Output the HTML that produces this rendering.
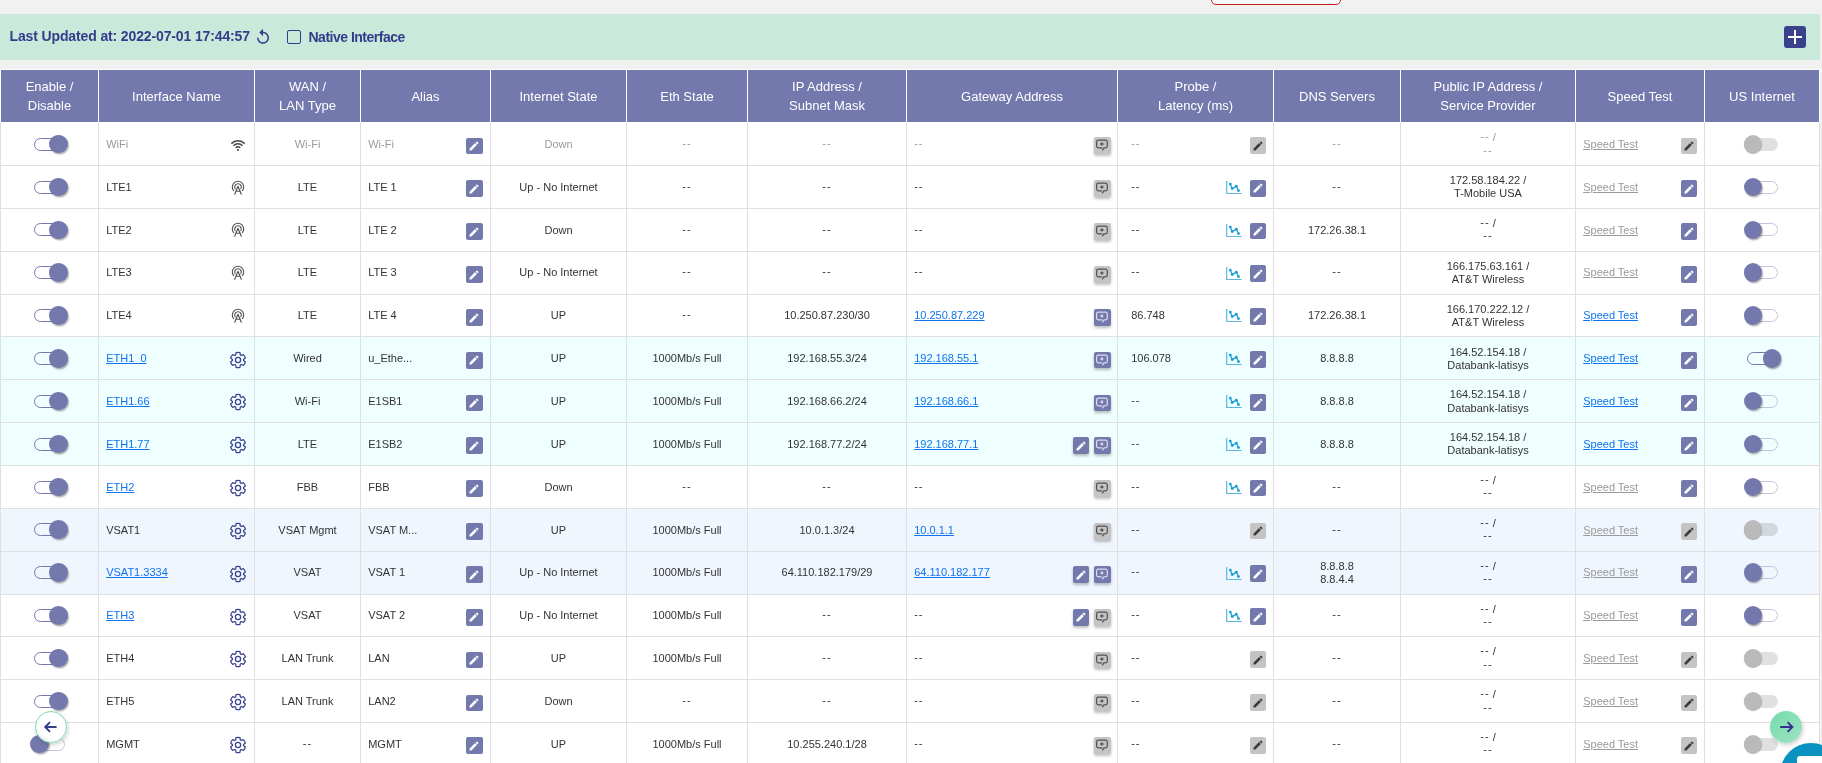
<!DOCTYPE html><html><head><meta charset="utf-8"><style>
*{box-sizing:border-box;margin:0;padding:0}
html,body{width:1822px;height:763px;overflow:hidden;background:#f1f1f1;font-family:"Liberation Sans",sans-serif;position:relative}
.a{position:absolute}
.t{position:absolute;font-size:11px;line-height:13.3px;white-space:nowrap;color:#333}
.g{color:#9a9a9a}
.lk{color:#0f74ee;text-decoration:underline}
.lg{color:#9a9a9a;text-decoration:underline}
.ht{position:absolute;color:#fff;font-size:13px;line-height:19px;text-align:center;white-space:nowrap}
.btn{position:absolute;width:16.5px;height:16.8px;border-radius:2px;background:#7479ad}
.btn.gr{background:#c4c4c4}
.sh{box-shadow:0 2px 3px rgba(0,0,0,.25)}
.trk{position:absolute;width:30.5px;height:13px;border-radius:7px;border:1px solid #7479ad;background:transparent}
.trk.off{border-color:#c3c5df}
.trk.dis{border:none;background:rgba(0,0,0,.12)}
.knob{position:absolute;width:18.5px;height:18.5px;border-radius:50%;background:#7479ad;box-shadow:1px 1.5px 1.5px rgba(0,0,0,.3)}
.knob.dis{background:#bababa;box-shadow:0 1px 1px rgba(0,0,0,.3)}
svg{position:absolute;overflow:visible}
</style></head><body><div style="position:absolute;left:0;top:0;width:1822px;height:763px;will-change:transform">
<div class="a" style="left:1211px;top:-20px;width:130px;height:25px;border:1.6px solid #c41f1f;border-radius:5px;background:#f4f7f7"></div>
<div class="a" style="left:0;top:14px;width:1820px;height:46px;background:#c9e9da"></div>
<div class="a" style="left:9.5px;top:27.8px;font-size:14px;line-height:16px;font-weight:bold;letter-spacing:-0.13px;color:#343c8b;white-space:nowrap">Last Updated at: 2022-07-01 17:44:57</div>
<svg style="left:254px;top:27.5px" width="18" height="18" viewBox="0 0 24 24"><path fill="#343c8b" d="M12 5V1L7 6l5 5V7c3.31 0 6 2.69 6 6s-2.69 6-6 6-6-2.69-6-6H4c0 4.42 3.58 8 8 8s8-3.58 8-8-3.58-8-8-8z"/></svg>
<div class="a" style="left:287px;top:30px;width:13.8px;height:13.8px;border:1.8px solid #343c8b;border-radius:2px"></div>
<div class="a" style="left:308.5px;top:29.2px;font-size:14px;line-height:16px;font-weight:bold;letter-spacing:-0.5px;color:#343c8b;white-space:nowrap">Native Interface</div>
<div class="a" style="left:1784px;top:26px;width:22px;height:22px;border-radius:3px;background:#39418c"></div>
<div class="a" style="left:1788px;top:36px;width:14px;height:2.2px;background:#fff"></div>
<div class="a" style="left:1793.9px;top:30px;width:2.2px;height:14px;background:#fff"></div>
<div class="a" style="left:0;top:69px;width:1820px;height:700px;background:#fff"></div>
<div class="a" style="left:1px;top:70px;width:1818px;height:52px;background:#7479ad"></div>
<div class="a" style="left:98px;top:70px;width:1px;height:52px;background:#fff"></div>
<div class="a" style="left:254px;top:70px;width:1px;height:52px;background:#fff"></div>
<div class="a" style="left:360px;top:70px;width:1px;height:52px;background:#fff"></div>
<div class="a" style="left:490px;top:70px;width:1px;height:52px;background:#fff"></div>
<div class="a" style="left:626px;top:70px;width:1px;height:52px;background:#fff"></div>
<div class="a" style="left:747px;top:70px;width:1px;height:52px;background:#fff"></div>
<div class="a" style="left:906px;top:70px;width:1px;height:52px;background:#fff"></div>
<div class="a" style="left:1117px;top:70px;width:1px;height:52px;background:#fff"></div>
<div class="a" style="left:1273px;top:70px;width:1px;height:52px;background:#fff"></div>
<div class="a" style="left:1400px;top:70px;width:1px;height:52px;background:#fff"></div>
<div class="a" style="left:1575px;top:70px;width:1px;height:52px;background:#fff"></div>
<div class="a" style="left:1704px;top:70px;width:1px;height:52px;background:#fff"></div>
<div class="ht" style="left:1px;top:77.0px;width:97px">Enable /<br>Disable</div>
<div class="ht" style="left:99px;top:86.5px;width:155px">Interface Name</div>
<div class="ht" style="left:255px;top:77.0px;width:105px">WAN /<br>LAN Type</div>
<div class="ht" style="left:361px;top:86.5px;width:129px">Alias</div>
<div class="ht" style="left:491px;top:86.5px;width:135px">Internet State</div>
<div class="ht" style="left:627px;top:86.5px;width:120px">Eth State</div>
<div class="ht" style="left:748px;top:77.0px;width:158px">IP Address /<br>Subnet Mask</div>
<div class="ht" style="left:907px;top:86.5px;width:210px">Gateway Address</div>
<div class="ht" style="left:1118px;top:77.0px;width:155px">Probe /<br>Latency (ms)</div>
<div class="ht" style="left:1274px;top:86.5px;width:126px">DNS Servers</div>
<div class="ht" style="left:1401px;top:77.0px;width:174px">Public IP Address /<br>Service Provider</div>
<div class="ht" style="left:1576px;top:86.5px;width:128px">Speed Test</div>
<div class="ht" style="left:1705px;top:86.5px;width:114px">US Internet</div>
<div class="a" style="left:1px;top:337.43px;width:1818px;height:42.846px;background:#effefe"></div>
<div class="a" style="left:1px;top:380.28px;width:1818px;height:42.846px;background:#effefe"></div>
<div class="a" style="left:1px;top:423.12px;width:1818px;height:42.846px;background:#effefe"></div>
<div class="a" style="left:1px;top:508.81px;width:1818px;height:42.846px;background:#eff6fd"></div>
<div class="a" style="left:1px;top:551.66px;width:1818px;height:42.846px;background:#eff6fd"></div>
<div class="a" style="left:0;top:165.05px;width:1820px;height:1px;background:#e0e0e0"></div>
<div class="a" style="left:0;top:207.89px;width:1820px;height:1px;background:#e0e0e0"></div>
<div class="a" style="left:0;top:250.74px;width:1820px;height:1px;background:#e0e0e0"></div>
<div class="a" style="left:0;top:293.58px;width:1820px;height:1px;background:#e0e0e0"></div>
<div class="a" style="left:0;top:336.43px;width:1820px;height:1px;background:#e0e0e0"></div>
<div class="a" style="left:0;top:379.28px;width:1820px;height:1px;background:#e0e0e0"></div>
<div class="a" style="left:0;top:422.12px;width:1820px;height:1px;background:#e0e0e0"></div>
<div class="a" style="left:0;top:464.97px;width:1820px;height:1px;background:#e0e0e0"></div>
<div class="a" style="left:0;top:507.81px;width:1820px;height:1px;background:#e0e0e0"></div>
<div class="a" style="left:0;top:550.66px;width:1820px;height:1px;background:#e0e0e0"></div>
<div class="a" style="left:0;top:593.51px;width:1820px;height:1px;background:#e0e0e0"></div>
<div class="a" style="left:0;top:636.35px;width:1820px;height:1px;background:#e0e0e0"></div>
<div class="a" style="left:0;top:679.20px;width:1820px;height:1px;background:#e0e0e0"></div>
<div class="a" style="left:0;top:722.04px;width:1820px;height:1px;background:#e0e0e0"></div>
<div class="a" style="left:0px;top:122px;width:1px;height:650px;background:#e0e0e0"></div>
<div class="a" style="left:98px;top:122px;width:1px;height:650px;background:#e0e0e0"></div>
<div class="a" style="left:254px;top:122px;width:1px;height:650px;background:#e0e0e0"></div>
<div class="a" style="left:360px;top:122px;width:1px;height:650px;background:#e0e0e0"></div>
<div class="a" style="left:490px;top:122px;width:1px;height:650px;background:#e0e0e0"></div>
<div class="a" style="left:626px;top:122px;width:1px;height:650px;background:#e0e0e0"></div>
<div class="a" style="left:747px;top:122px;width:1px;height:650px;background:#e0e0e0"></div>
<div class="a" style="left:906px;top:122px;width:1px;height:650px;background:#e0e0e0"></div>
<div class="a" style="left:1117px;top:122px;width:1px;height:650px;background:#e0e0e0"></div>
<div class="a" style="left:1273px;top:122px;width:1px;height:650px;background:#e0e0e0"></div>
<div class="a" style="left:1400px;top:122px;width:1px;height:650px;background:#e0e0e0"></div>
<div class="a" style="left:1575px;top:122px;width:1px;height:650px;background:#e0e0e0"></div>
<div class="a" style="left:1704px;top:122px;width:1px;height:650px;background:#e0e0e0"></div>
<div class="a" style="left:1819px;top:122px;width:1px;height:650px;background:#e0e0e0"></div>
<div class="trk " style="left:34px;top:137.77px"></div>
<div class="knob " style="left:49.25px;top:134.82px"></div>
<div class="t g" style="left:106.2px;top:137.92px">WiFi</div>
<svg style="left:230px;top:139.57px" width="16" height="12" viewBox="0 0 16 12"><path d="M5.70 7.78A3.2 3.2 0 0 1 10.30 7.78M3.54 5.69A6.2 6.2 0 0 1 12.46 5.69M1.38 3.61A9.2 9.2 0 0 1 14.62 3.61" fill="none" stroke="#474747" stroke-width="1.5"/><circle cx="8" cy="10" r="1.1" fill="#474747"/></svg>
<div class="t g" style="left:255px;top:137.92px;width:105px;text-align:center">Wi-Fi</div>
<div class="t g" style="left:368.2px;top:137.92px">Wi-Fi</div>
<div class="btn" style="left:466px;top:137.52px;width:17px"><svg style="left:2.3px;top:2.6px" width="12" height="12" viewBox="0 0 24 24"><path fill="#fff" d="M3 17.25V21h3.75L17.81 9.94l-3.75-3.75L3 17.25zM20.71 7.04c.39-.39.39-1.02 0-1.41l-2.34-2.34c-.39-.39-1.02-.39-1.41 0l-1.83 1.83 3.75 3.75 1.83-1.83z"/></svg></div>
<div class="t g" style="left:491px;top:137.92px;width:135px;text-align:center">Down</div>
<div class="t g" style="left:627px;top:137.92px;width:120px;text-align:center"><span style="letter-spacing:1px;position:relative;top:-1px">--</span></div>
<div class="t g" style="left:748px;top:137.92px;width:158px;text-align:center"><span style="letter-spacing:1px;position:relative;top:-1px">--</span></div>
<div class="t g" style="left:914.2px;top:137.92px"><span style="letter-spacing:1px;position:relative;top:-1px">--</span></div>
<div class="btn sh gr" style="left:1094px;top:137.42px"><svg style="left:0;top:0" width="16" height="16" viewBox="0 0 16 16"><path d="M4.4 3.1h7.1a1.8 1.8 0 0 1 1.8 1.8v4.2a1.8 1.8 0 0 1-1.8 1.8H9.9L8.6 12.9M7.6 10.9H4.4a1.8 1.8 0 0 1-1.8-1.8V4.9a1.8 1.8 0 0 1 1.8-1.8" fill="none" stroke="#505050" stroke-width="1.2" stroke-linecap="round" stroke-linejoin="round"/><path d="M7.9 5.4v3.2M6.3 7h3.2" stroke="#505050" stroke-width="1.3"/></svg></div>
<div class="t g" style="left:1131.2px;top:137.92px"><span style="letter-spacing:1px;position:relative;top:-1px">--</span></div>
<div class="btn gr" style="left:1250px;top:136.92px;width:16px"><svg style="left:2.3px;top:2.6px" width="12" height="12" viewBox="0 0 24 24"><path fill="#3a3a3a" d="M3 17.25V21h3.75L17.81 9.94l-3.75-3.75L3 17.25zM20.71 7.04c.39-.39.39-1.02 0-1.41l-2.34-2.34c-.39-.39-1.02-.39-1.41 0l-1.83 1.83 3.75 3.75 1.83-1.83z"/></svg></div>
<div class="t g" style="left:1274px;top:137.92px;width:126px;text-align:center"><span style="letter-spacing:1px;position:relative;top:-1px">--</span></div>
<div class="t g" style="left:1401px;top:131.27px;width:174px;text-align:center"><span style="letter-spacing:1px;position:relative;top:-1px">--</span> /<br><span style="letter-spacing:1px;position:relative;top:-1px">--</span></div>
<div class="t lg" style="left:1583.2px;top:137.92px">Speed Test</div>
<div class="btn gr" style="left:1681px;top:137.52px;width:16px"><svg style="left:2.3px;top:2.6px" width="12" height="12" viewBox="0 0 24 24"><path fill="#3a3a3a" d="M3 17.25V21h3.75L17.81 9.94l-3.75-3.75L3 17.25zM20.71 7.04c.39-.39.39-1.02 0-1.41l-2.34-2.34c-.39-.39-1.02-.39-1.41 0l-1.83 1.83 3.75 3.75 1.83-1.83z"/></svg></div>
<div class="trk dis" style="left:1747.3px;top:137.77px"></div>
<div class="knob dis" style="left:1743.55px;top:134.82px"></div>
<div class="trk " style="left:34px;top:180.62px"></div>
<div class="knob " style="left:49.25px;top:177.67px"></div>
<div class="t " style="left:106.2px;top:180.77px">LTE1</div>
<svg style="left:231.40px;top:179.62px" width="14" height="16" viewBox="0 0 14 16"><path d="M2.63 10.66A5.7 5.7 0 1 1 11.37 10.66M4.14 8.65A3.3 3.3 0 1 1 9.86 8.65" fill="none" stroke="#4d4d4d" stroke-width="1.1" stroke-linecap="round"/><path d="M7 6.3L3.7 14.3M7 6.3L10.3 14.3M5.3 11.3h3.4" fill="none" stroke="#4d4d4d" stroke-width="1.1" stroke-linecap="round" stroke-linejoin="round"/></svg>
<div class="t " style="left:255px;top:180.77px;width:105px;text-align:center">LTE</div>
<div class="t " style="left:368.2px;top:180.77px">LTE 1</div>
<div class="btn" style="left:466px;top:180.37px;width:17px"><svg style="left:2.3px;top:2.6px" width="12" height="12" viewBox="0 0 24 24"><path fill="#fff" d="M3 17.25V21h3.75L17.81 9.94l-3.75-3.75L3 17.25zM20.71 7.04c.39-.39.39-1.02 0-1.41l-2.34-2.34c-.39-.39-1.02-.39-1.41 0l-1.83 1.83 3.75 3.75 1.83-1.83z"/></svg></div>
<div class="t " style="left:491px;top:180.77px;width:135px;text-align:center">Up - No Internet</div>
<div class="t " style="left:627px;top:180.77px;width:120px;text-align:center"><span style="letter-spacing:1px;position:relative;top:-1px">--</span></div>
<div class="t " style="left:748px;top:180.77px;width:158px;text-align:center"><span style="letter-spacing:1px;position:relative;top:-1px">--</span></div>
<div class="t " style="left:914.2px;top:180.77px"><span style="letter-spacing:1px;position:relative;top:-1px">--</span></div>
<div class="btn sh gr" style="left:1094px;top:180.27px"><svg style="left:0;top:0" width="16" height="16" viewBox="0 0 16 16"><path d="M4.4 3.1h7.1a1.8 1.8 0 0 1 1.8 1.8v4.2a1.8 1.8 0 0 1-1.8 1.8H9.9L8.6 12.9M7.6 10.9H4.4a1.8 1.8 0 0 1-1.8-1.8V4.9a1.8 1.8 0 0 1 1.8-1.8" fill="none" stroke="#505050" stroke-width="1.2" stroke-linecap="round" stroke-linejoin="round"/><path d="M7.9 5.4v3.2M6.3 7h3.2" stroke="#505050" stroke-width="1.3"/></svg></div>
<div class="t " style="left:1131.2px;top:180.77px"><span style="letter-spacing:1px;position:relative;top:-1px">--</span></div>
<svg style="left:1226px;top:180.92px" width="16" height="14" viewBox="0 0 16 14"><path d="M0.7 0v12.5H15.8" fill="none" stroke="#5ab8dd" stroke-width="1.2"/><path d="M4.3 3.1L6.2 7.6 10.3 5.2 12.5 9.6" fill="none" stroke="#169dd6" stroke-width="1.2"/><circle cx="4.3" cy="3.1" r="1.4" fill="#169dd6"/><circle cx="6.2" cy="7.6" r="1.4" fill="#169dd6"/><circle cx="10.3" cy="5.2" r="1.4" fill="#169dd6"/><circle cx="12.5" cy="9.6" r="1.4" fill="#169dd6"/></svg>
<div class="btn" style="left:1250px;top:179.77px;width:16px"><svg style="left:2.3px;top:2.6px" width="12" height="12" viewBox="0 0 24 24"><path fill="#fff" d="M3 17.25V21h3.75L17.81 9.94l-3.75-3.75L3 17.25zM20.71 7.04c.39-.39.39-1.02 0-1.41l-2.34-2.34c-.39-.39-1.02-.39-1.41 0l-1.83 1.83 3.75 3.75 1.83-1.83z"/></svg></div>
<div class="t " style="left:1274px;top:180.77px;width:126px;text-align:center"><span style="letter-spacing:1px;position:relative;top:-1px">--</span></div>
<div class="t " style="left:1401px;top:174.12px;width:174px;text-align:center">172.58.184.22 /<br>T-Mobile USA</div>
<div class="t lg" style="left:1583.2px;top:180.77px">Speed Test</div>
<div class="btn" style="left:1681px;top:180.37px;width:16px"><svg style="left:2.3px;top:2.6px" width="12" height="12" viewBox="0 0 24 24"><path fill="#fff" d="M3 17.25V21h3.75L17.81 9.94l-3.75-3.75L3 17.25zM20.71 7.04c.39-.39.39-1.02 0-1.41l-2.34-2.34c-.39-.39-1.02-.39-1.41 0l-1.83 1.83 3.75 3.75 1.83-1.83z"/></svg></div>
<div class="trk off" style="left:1747.3px;top:180.62px"></div>
<div class="knob " style="left:1743.55px;top:177.67px"></div>
<div class="trk " style="left:34px;top:223.46px"></div>
<div class="knob " style="left:49.25px;top:220.51px"></div>
<div class="t " style="left:106.2px;top:223.61px">LTE2</div>
<svg style="left:231.40px;top:222.46px" width="14" height="16" viewBox="0 0 14 16"><path d="M2.63 10.66A5.7 5.7 0 1 1 11.37 10.66M4.14 8.65A3.3 3.3 0 1 1 9.86 8.65" fill="none" stroke="#4d4d4d" stroke-width="1.1" stroke-linecap="round"/><path d="M7 6.3L3.7 14.3M7 6.3L10.3 14.3M5.3 11.3h3.4" fill="none" stroke="#4d4d4d" stroke-width="1.1" stroke-linecap="round" stroke-linejoin="round"/></svg>
<div class="t " style="left:255px;top:223.61px;width:105px;text-align:center">LTE</div>
<div class="t " style="left:368.2px;top:223.61px">LTE 2</div>
<div class="btn" style="left:466px;top:223.21px;width:17px"><svg style="left:2.3px;top:2.6px" width="12" height="12" viewBox="0 0 24 24"><path fill="#fff" d="M3 17.25V21h3.75L17.81 9.94l-3.75-3.75L3 17.25zM20.71 7.04c.39-.39.39-1.02 0-1.41l-2.34-2.34c-.39-.39-1.02-.39-1.41 0l-1.83 1.83 3.75 3.75 1.83-1.83z"/></svg></div>
<div class="t " style="left:491px;top:223.61px;width:135px;text-align:center">Down</div>
<div class="t " style="left:627px;top:223.61px;width:120px;text-align:center"><span style="letter-spacing:1px;position:relative;top:-1px">--</span></div>
<div class="t " style="left:748px;top:223.61px;width:158px;text-align:center"><span style="letter-spacing:1px;position:relative;top:-1px">--</span></div>
<div class="t " style="left:914.2px;top:223.61px"><span style="letter-spacing:1px;position:relative;top:-1px">--</span></div>
<div class="btn sh gr" style="left:1094px;top:223.11px"><svg style="left:0;top:0" width="16" height="16" viewBox="0 0 16 16"><path d="M4.4 3.1h7.1a1.8 1.8 0 0 1 1.8 1.8v4.2a1.8 1.8 0 0 1-1.8 1.8H9.9L8.6 12.9M7.6 10.9H4.4a1.8 1.8 0 0 1-1.8-1.8V4.9a1.8 1.8 0 0 1 1.8-1.8" fill="none" stroke="#505050" stroke-width="1.2" stroke-linecap="round" stroke-linejoin="round"/><path d="M7.9 5.4v3.2M6.3 7h3.2" stroke="#505050" stroke-width="1.3"/></svg></div>
<div class="t " style="left:1131.2px;top:223.61px"><span style="letter-spacing:1px;position:relative;top:-1px">--</span></div>
<svg style="left:1226px;top:223.76px" width="16" height="14" viewBox="0 0 16 14"><path d="M0.7 0v12.5H15.8" fill="none" stroke="#5ab8dd" stroke-width="1.2"/><path d="M4.3 3.1L6.2 7.6 10.3 5.2 12.5 9.6" fill="none" stroke="#169dd6" stroke-width="1.2"/><circle cx="4.3" cy="3.1" r="1.4" fill="#169dd6"/><circle cx="6.2" cy="7.6" r="1.4" fill="#169dd6"/><circle cx="10.3" cy="5.2" r="1.4" fill="#169dd6"/><circle cx="12.5" cy="9.6" r="1.4" fill="#169dd6"/></svg>
<div class="btn" style="left:1250px;top:222.61px;width:16px"><svg style="left:2.3px;top:2.6px" width="12" height="12" viewBox="0 0 24 24"><path fill="#fff" d="M3 17.25V21h3.75L17.81 9.94l-3.75-3.75L3 17.25zM20.71 7.04c.39-.39.39-1.02 0-1.41l-2.34-2.34c-.39-.39-1.02-.39-1.41 0l-1.83 1.83 3.75 3.75 1.83-1.83z"/></svg></div>
<div class="t " style="left:1274px;top:223.61px;width:126px;text-align:center">172.26.38.1</div>
<div class="t " style="left:1401px;top:216.96px;width:174px;text-align:center"><span style="letter-spacing:1px;position:relative;top:-1px">--</span> /<br><span style="letter-spacing:1px;position:relative;top:-1px">--</span></div>
<div class="t lg" style="left:1583.2px;top:223.61px">Speed Test</div>
<div class="btn" style="left:1681px;top:223.21px;width:16px"><svg style="left:2.3px;top:2.6px" width="12" height="12" viewBox="0 0 24 24"><path fill="#fff" d="M3 17.25V21h3.75L17.81 9.94l-3.75-3.75L3 17.25zM20.71 7.04c.39-.39.39-1.02 0-1.41l-2.34-2.34c-.39-.39-1.02-.39-1.41 0l-1.83 1.83 3.75 3.75 1.83-1.83z"/></svg></div>
<div class="trk off" style="left:1747.3px;top:223.46px"></div>
<div class="knob " style="left:1743.55px;top:220.51px"></div>
<div class="trk " style="left:34px;top:266.31px"></div>
<div class="knob " style="left:49.25px;top:263.36px"></div>
<div class="t " style="left:106.2px;top:266.46px">LTE3</div>
<svg style="left:231.40px;top:265.31px" width="14" height="16" viewBox="0 0 14 16"><path d="M2.63 10.66A5.7 5.7 0 1 1 11.37 10.66M4.14 8.65A3.3 3.3 0 1 1 9.86 8.65" fill="none" stroke="#4d4d4d" stroke-width="1.1" stroke-linecap="round"/><path d="M7 6.3L3.7 14.3M7 6.3L10.3 14.3M5.3 11.3h3.4" fill="none" stroke="#4d4d4d" stroke-width="1.1" stroke-linecap="round" stroke-linejoin="round"/></svg>
<div class="t " style="left:255px;top:266.46px;width:105px;text-align:center">LTE</div>
<div class="t " style="left:368.2px;top:266.46px">LTE 3</div>
<div class="btn" style="left:466px;top:266.06px;width:17px"><svg style="left:2.3px;top:2.6px" width="12" height="12" viewBox="0 0 24 24"><path fill="#fff" d="M3 17.25V21h3.75L17.81 9.94l-3.75-3.75L3 17.25zM20.71 7.04c.39-.39.39-1.02 0-1.41l-2.34-2.34c-.39-.39-1.02-.39-1.41 0l-1.83 1.83 3.75 3.75 1.83-1.83z"/></svg></div>
<div class="t " style="left:491px;top:266.46px;width:135px;text-align:center">Up - No Internet</div>
<div class="t " style="left:627px;top:266.46px;width:120px;text-align:center"><span style="letter-spacing:1px;position:relative;top:-1px">--</span></div>
<div class="t " style="left:748px;top:266.46px;width:158px;text-align:center"><span style="letter-spacing:1px;position:relative;top:-1px">--</span></div>
<div class="t " style="left:914.2px;top:266.46px"><span style="letter-spacing:1px;position:relative;top:-1px">--</span></div>
<div class="btn sh gr" style="left:1094px;top:265.96px"><svg style="left:0;top:0" width="16" height="16" viewBox="0 0 16 16"><path d="M4.4 3.1h7.1a1.8 1.8 0 0 1 1.8 1.8v4.2a1.8 1.8 0 0 1-1.8 1.8H9.9L8.6 12.9M7.6 10.9H4.4a1.8 1.8 0 0 1-1.8-1.8V4.9a1.8 1.8 0 0 1 1.8-1.8" fill="none" stroke="#505050" stroke-width="1.2" stroke-linecap="round" stroke-linejoin="round"/><path d="M7.9 5.4v3.2M6.3 7h3.2" stroke="#505050" stroke-width="1.3"/></svg></div>
<div class="t " style="left:1131.2px;top:266.46px"><span style="letter-spacing:1px;position:relative;top:-1px">--</span></div>
<svg style="left:1226px;top:266.61px" width="16" height="14" viewBox="0 0 16 14"><path d="M0.7 0v12.5H15.8" fill="none" stroke="#5ab8dd" stroke-width="1.2"/><path d="M4.3 3.1L6.2 7.6 10.3 5.2 12.5 9.6" fill="none" stroke="#169dd6" stroke-width="1.2"/><circle cx="4.3" cy="3.1" r="1.4" fill="#169dd6"/><circle cx="6.2" cy="7.6" r="1.4" fill="#169dd6"/><circle cx="10.3" cy="5.2" r="1.4" fill="#169dd6"/><circle cx="12.5" cy="9.6" r="1.4" fill="#169dd6"/></svg>
<div class="btn" style="left:1250px;top:265.46px;width:16px"><svg style="left:2.3px;top:2.6px" width="12" height="12" viewBox="0 0 24 24"><path fill="#fff" d="M3 17.25V21h3.75L17.81 9.94l-3.75-3.75L3 17.25zM20.71 7.04c.39-.39.39-1.02 0-1.41l-2.34-2.34c-.39-.39-1.02-.39-1.41 0l-1.83 1.83 3.75 3.75 1.83-1.83z"/></svg></div>
<div class="t " style="left:1274px;top:266.46px;width:126px;text-align:center"><span style="letter-spacing:1px;position:relative;top:-1px">--</span></div>
<div class="t " style="left:1401px;top:259.81px;width:174px;text-align:center">166.175.63.161 /<br>AT&amp;T Wireless</div>
<div class="t lg" style="left:1583.2px;top:266.46px">Speed Test</div>
<div class="btn" style="left:1681px;top:266.06px;width:16px"><svg style="left:2.3px;top:2.6px" width="12" height="12" viewBox="0 0 24 24"><path fill="#fff" d="M3 17.25V21h3.75L17.81 9.94l-3.75-3.75L3 17.25zM20.71 7.04c.39-.39.39-1.02 0-1.41l-2.34-2.34c-.39-.39-1.02-.39-1.41 0l-1.83 1.83 3.75 3.75 1.83-1.83z"/></svg></div>
<div class="trk off" style="left:1747.3px;top:266.31px"></div>
<div class="knob " style="left:1743.55px;top:263.36px"></div>
<div class="trk " style="left:34px;top:309.16px"></div>
<div class="knob " style="left:49.25px;top:306.21px"></div>
<div class="t " style="left:106.2px;top:309.31px">LTE4</div>
<svg style="left:231.40px;top:308.16px" width="14" height="16" viewBox="0 0 14 16"><path d="M2.63 10.66A5.7 5.7 0 1 1 11.37 10.66M4.14 8.65A3.3 3.3 0 1 1 9.86 8.65" fill="none" stroke="#4d4d4d" stroke-width="1.1" stroke-linecap="round"/><path d="M7 6.3L3.7 14.3M7 6.3L10.3 14.3M5.3 11.3h3.4" fill="none" stroke="#4d4d4d" stroke-width="1.1" stroke-linecap="round" stroke-linejoin="round"/></svg>
<div class="t " style="left:255px;top:309.31px;width:105px;text-align:center">LTE</div>
<div class="t " style="left:368.2px;top:309.31px">LTE 4</div>
<div class="btn" style="left:466px;top:308.91px;width:17px"><svg style="left:2.3px;top:2.6px" width="12" height="12" viewBox="0 0 24 24"><path fill="#fff" d="M3 17.25V21h3.75L17.81 9.94l-3.75-3.75L3 17.25zM20.71 7.04c.39-.39.39-1.02 0-1.41l-2.34-2.34c-.39-.39-1.02-.39-1.41 0l-1.83 1.83 3.75 3.75 1.83-1.83z"/></svg></div>
<div class="t " style="left:491px;top:309.31px;width:135px;text-align:center">UP</div>
<div class="t " style="left:627px;top:309.31px;width:120px;text-align:center"><span style="letter-spacing:1px;position:relative;top:-1px">--</span></div>
<div class="t " style="left:748px;top:309.31px;width:158px;text-align:center">10.250.87.230/30</div>
<div class="t lk" style="left:914.2px;top:309.31px">10.250.87.229</div>
<div class="btn sh" style="left:1094px;top:308.81px"><svg style="left:0;top:0" width="16" height="16" viewBox="0 0 16 16"><path d="M4.4 3.1h7.1a1.8 1.8 0 0 1 1.8 1.8v4.2a1.8 1.8 0 0 1-1.8 1.8H9.9L8.6 12.9M7.6 10.9H4.4a1.8 1.8 0 0 1-1.8-1.8V4.9a1.8 1.8 0 0 1 1.8-1.8" fill="none" stroke="#dcdcee" stroke-width="1.2" stroke-linecap="round" stroke-linejoin="round"/><path d="M6.7 5.7l2.4 2.4M9.1 5.7l-2.4 2.4" stroke="#dcdcee" stroke-width="1.2"/></svg></div>
<div class="t " style="left:1131.2px;top:309.31px">86.748</div>
<svg style="left:1226px;top:309.46px" width="16" height="14" viewBox="0 0 16 14"><path d="M0.7 0v12.5H15.8" fill="none" stroke="#5ab8dd" stroke-width="1.2"/><path d="M4.3 3.1L6.2 7.6 10.3 5.2 12.5 9.6" fill="none" stroke="#169dd6" stroke-width="1.2"/><circle cx="4.3" cy="3.1" r="1.4" fill="#169dd6"/><circle cx="6.2" cy="7.6" r="1.4" fill="#169dd6"/><circle cx="10.3" cy="5.2" r="1.4" fill="#169dd6"/><circle cx="12.5" cy="9.6" r="1.4" fill="#169dd6"/></svg>
<div class="btn" style="left:1250px;top:308.31px;width:16px"><svg style="left:2.3px;top:2.6px" width="12" height="12" viewBox="0 0 24 24"><path fill="#fff" d="M3 17.25V21h3.75L17.81 9.94l-3.75-3.75L3 17.25zM20.71 7.04c.39-.39.39-1.02 0-1.41l-2.34-2.34c-.39-.39-1.02-.39-1.41 0l-1.83 1.83 3.75 3.75 1.83-1.83z"/></svg></div>
<div class="t " style="left:1274px;top:309.31px;width:126px;text-align:center">172.26.38.1</div>
<div class="t " style="left:1401px;top:302.66px;width:174px;text-align:center">166.170.222.12 /<br>AT&amp;T Wireless</div>
<div class="t lk" style="left:1583.2px;top:309.31px">Speed Test</div>
<div class="btn" style="left:1681px;top:308.91px;width:16px"><svg style="left:2.3px;top:2.6px" width="12" height="12" viewBox="0 0 24 24"><path fill="#fff" d="M3 17.25V21h3.75L17.81 9.94l-3.75-3.75L3 17.25zM20.71 7.04c.39-.39.39-1.02 0-1.41l-2.34-2.34c-.39-.39-1.02-.39-1.41 0l-1.83 1.83 3.75 3.75 1.83-1.83z"/></svg></div>
<div class="trk off" style="left:1747.3px;top:309.16px"></div>
<div class="knob " style="left:1743.55px;top:306.21px"></div>
<div class="trk " style="left:34px;top:352.00px"></div>
<div class="knob " style="left:49.25px;top:349.05px"></div>
<div class="t lk" style="left:106.2px;top:352.15px">ETH1_0</div>
<svg style="left:229px;top:350.50px" width="18" height="18" viewBox="0 0 18 18"><path d="M6.72 3.88L7.03 1.66A7.6 7.6 0 0 1 10.97 1.66L11.28 3.88A5.6 5.6 0 0 1 12.29 4.47L14.37 3.63A7.6 7.6 0 0 1 16.34 7.03L14.57 8.41A5.6 5.6 0 0 1 14.57 9.59L16.34 10.97A7.6 7.6 0 0 1 14.37 14.37L12.29 13.53A5.6 5.6 0 0 1 11.28 14.12L10.97 16.34A7.6 7.6 0 0 1 7.03 16.34L6.72 14.12A5.6 5.6 0 0 1 5.71 13.53L3.63 14.37A7.6 7.6 0 0 1 1.66 10.97L3.43 9.59A5.6 5.6 0 0 1 3.43 8.41L1.66 7.03A7.6 7.6 0 0 1 3.63 3.63L5.71 4.47A5.6 5.6 0 0 1 6.72 3.88Z" fill="none" stroke="#3a4290" stroke-width="1.25" stroke-linejoin="round"/><circle cx="9" cy="9" r="2.6" fill="none" stroke="#3a4290" stroke-width="1.25"/></svg>
<div class="t " style="left:255px;top:352.15px;width:105px;text-align:center">Wired</div>
<div class="t " style="left:368.2px;top:352.15px">u_Ethe...</div>
<div class="btn" style="left:466px;top:351.75px;width:17px"><svg style="left:2.3px;top:2.6px" width="12" height="12" viewBox="0 0 24 24"><path fill="#fff" d="M3 17.25V21h3.75L17.81 9.94l-3.75-3.75L3 17.25zM20.71 7.04c.39-.39.39-1.02 0-1.41l-2.34-2.34c-.39-.39-1.02-.39-1.41 0l-1.83 1.83 3.75 3.75 1.83-1.83z"/></svg></div>
<div class="t " style="left:491px;top:352.15px;width:135px;text-align:center">UP</div>
<div class="t " style="left:627px;top:352.15px;width:120px;text-align:center">1000Mb/s Full</div>
<div class="t " style="left:748px;top:352.15px;width:158px;text-align:center">192.168.55.3/24</div>
<div class="t lk" style="left:914.2px;top:352.15px">192.168.55.1</div>
<div class="btn sh" style="left:1094px;top:351.65px"><svg style="left:0;top:0" width="16" height="16" viewBox="0 0 16 16"><path d="M4.4 3.1h7.1a1.8 1.8 0 0 1 1.8 1.8v4.2a1.8 1.8 0 0 1-1.8 1.8H9.9L8.6 12.9M7.6 10.9H4.4a1.8 1.8 0 0 1-1.8-1.8V4.9a1.8 1.8 0 0 1 1.8-1.8" fill="none" stroke="#dcdcee" stroke-width="1.2" stroke-linecap="round" stroke-linejoin="round"/><path d="M6.7 5.7l2.4 2.4M9.1 5.7l-2.4 2.4" stroke="#dcdcee" stroke-width="1.2"/></svg></div>
<div class="t " style="left:1131.2px;top:352.15px">106.078</div>
<svg style="left:1226px;top:352.30px" width="16" height="14" viewBox="0 0 16 14"><path d="M0.7 0v12.5H15.8" fill="none" stroke="#5ab8dd" stroke-width="1.2"/><path d="M4.3 3.1L6.2 7.6 10.3 5.2 12.5 9.6" fill="none" stroke="#169dd6" stroke-width="1.2"/><circle cx="4.3" cy="3.1" r="1.4" fill="#169dd6"/><circle cx="6.2" cy="7.6" r="1.4" fill="#169dd6"/><circle cx="10.3" cy="5.2" r="1.4" fill="#169dd6"/><circle cx="12.5" cy="9.6" r="1.4" fill="#169dd6"/></svg>
<div class="btn" style="left:1250px;top:351.15px;width:16px"><svg style="left:2.3px;top:2.6px" width="12" height="12" viewBox="0 0 24 24"><path fill="#fff" d="M3 17.25V21h3.75L17.81 9.94l-3.75-3.75L3 17.25zM20.71 7.04c.39-.39.39-1.02 0-1.41l-2.34-2.34c-.39-.39-1.02-.39-1.41 0l-1.83 1.83 3.75 3.75 1.83-1.83z"/></svg></div>
<div class="t " style="left:1274px;top:352.15px;width:126px;text-align:center">8.8.8.8</div>
<div class="t " style="left:1401px;top:345.50px;width:174px;text-align:center">164.52.154.18 /<br>Databank-latisys</div>
<div class="t lk" style="left:1583.2px;top:352.15px">Speed Test</div>
<div class="btn" style="left:1681px;top:351.75px;width:16px"><svg style="left:2.3px;top:2.6px" width="12" height="12" viewBox="0 0 24 24"><path fill="#fff" d="M3 17.25V21h3.75L17.81 9.94l-3.75-3.75L3 17.25zM20.71 7.04c.39-.39.39-1.02 0-1.41l-2.34-2.34c-.39-.39-1.02-.39-1.41 0l-1.83 1.83 3.75 3.75 1.83-1.83z"/></svg></div>
<div class="trk " style="left:1747.3px;top:352.00px"></div>
<div class="knob " style="left:1762.55px;top:349.05px"></div>
<div class="trk " style="left:34px;top:394.85px"></div>
<div class="knob " style="left:49.25px;top:391.90px"></div>
<div class="t lk" style="left:106.2px;top:395.00px">ETH1.66</div>
<svg style="left:229px;top:393.35px" width="18" height="18" viewBox="0 0 18 18"><path d="M6.72 3.88L7.03 1.66A7.6 7.6 0 0 1 10.97 1.66L11.28 3.88A5.6 5.6 0 0 1 12.29 4.47L14.37 3.63A7.6 7.6 0 0 1 16.34 7.03L14.57 8.41A5.6 5.6 0 0 1 14.57 9.59L16.34 10.97A7.6 7.6 0 0 1 14.37 14.37L12.29 13.53A5.6 5.6 0 0 1 11.28 14.12L10.97 16.34A7.6 7.6 0 0 1 7.03 16.34L6.72 14.12A5.6 5.6 0 0 1 5.71 13.53L3.63 14.37A7.6 7.6 0 0 1 1.66 10.97L3.43 9.59A5.6 5.6 0 0 1 3.43 8.41L1.66 7.03A7.6 7.6 0 0 1 3.63 3.63L5.71 4.47A5.6 5.6 0 0 1 6.72 3.88Z" fill="none" stroke="#3a4290" stroke-width="1.25" stroke-linejoin="round"/><circle cx="9" cy="9" r="2.6" fill="none" stroke="#3a4290" stroke-width="1.25"/></svg>
<div class="t " style="left:255px;top:395.00px;width:105px;text-align:center">Wi-Fi</div>
<div class="t " style="left:368.2px;top:395.00px">E1SB1</div>
<div class="btn" style="left:466px;top:394.60px;width:17px"><svg style="left:2.3px;top:2.6px" width="12" height="12" viewBox="0 0 24 24"><path fill="#fff" d="M3 17.25V21h3.75L17.81 9.94l-3.75-3.75L3 17.25zM20.71 7.04c.39-.39.39-1.02 0-1.41l-2.34-2.34c-.39-.39-1.02-.39-1.41 0l-1.83 1.83 3.75 3.75 1.83-1.83z"/></svg></div>
<div class="t " style="left:491px;top:395.00px;width:135px;text-align:center">UP</div>
<div class="t " style="left:627px;top:395.00px;width:120px;text-align:center">1000Mb/s Full</div>
<div class="t " style="left:748px;top:395.00px;width:158px;text-align:center">192.168.66.2/24</div>
<div class="t lk" style="left:914.2px;top:395.00px">192.168.66.1</div>
<div class="btn sh" style="left:1094px;top:394.50px"><svg style="left:0;top:0" width="16" height="16" viewBox="0 0 16 16"><path d="M4.4 3.1h7.1a1.8 1.8 0 0 1 1.8 1.8v4.2a1.8 1.8 0 0 1-1.8 1.8H9.9L8.6 12.9M7.6 10.9H4.4a1.8 1.8 0 0 1-1.8-1.8V4.9a1.8 1.8 0 0 1 1.8-1.8" fill="none" stroke="#dcdcee" stroke-width="1.2" stroke-linecap="round" stroke-linejoin="round"/><path d="M6.7 5.7l2.4 2.4M9.1 5.7l-2.4 2.4" stroke="#dcdcee" stroke-width="1.2"/></svg></div>
<div class="t " style="left:1131.2px;top:395.00px"><span style="letter-spacing:1px;position:relative;top:-1px">--</span></div>
<svg style="left:1226px;top:395.15px" width="16" height="14" viewBox="0 0 16 14"><path d="M0.7 0v12.5H15.8" fill="none" stroke="#5ab8dd" stroke-width="1.2"/><path d="M4.3 3.1L6.2 7.6 10.3 5.2 12.5 9.6" fill="none" stroke="#169dd6" stroke-width="1.2"/><circle cx="4.3" cy="3.1" r="1.4" fill="#169dd6"/><circle cx="6.2" cy="7.6" r="1.4" fill="#169dd6"/><circle cx="10.3" cy="5.2" r="1.4" fill="#169dd6"/><circle cx="12.5" cy="9.6" r="1.4" fill="#169dd6"/></svg>
<div class="btn" style="left:1250px;top:394.00px;width:16px"><svg style="left:2.3px;top:2.6px" width="12" height="12" viewBox="0 0 24 24"><path fill="#fff" d="M3 17.25V21h3.75L17.81 9.94l-3.75-3.75L3 17.25zM20.71 7.04c.39-.39.39-1.02 0-1.41l-2.34-2.34c-.39-.39-1.02-.39-1.41 0l-1.83 1.83 3.75 3.75 1.83-1.83z"/></svg></div>
<div class="t " style="left:1274px;top:395.00px;width:126px;text-align:center">8.8.8.8</div>
<div class="t " style="left:1401px;top:388.35px;width:174px;text-align:center">164.52.154.18 /<br>Databank-latisys</div>
<div class="t lk" style="left:1583.2px;top:395.00px">Speed Test</div>
<div class="btn" style="left:1681px;top:394.60px;width:16px"><svg style="left:2.3px;top:2.6px" width="12" height="12" viewBox="0 0 24 24"><path fill="#fff" d="M3 17.25V21h3.75L17.81 9.94l-3.75-3.75L3 17.25zM20.71 7.04c.39-.39.39-1.02 0-1.41l-2.34-2.34c-.39-.39-1.02-.39-1.41 0l-1.83 1.83 3.75 3.75 1.83-1.83z"/></svg></div>
<div class="trk off" style="left:1747.3px;top:394.85px"></div>
<div class="knob " style="left:1743.55px;top:391.90px"></div>
<div class="trk " style="left:34px;top:437.69px"></div>
<div class="knob " style="left:49.25px;top:434.75px"></div>
<div class="t lk" style="left:106.2px;top:437.85px">ETH1.77</div>
<svg style="left:229px;top:436.19px" width="18" height="18" viewBox="0 0 18 18"><path d="M6.72 3.88L7.03 1.66A7.6 7.6 0 0 1 10.97 1.66L11.28 3.88A5.6 5.6 0 0 1 12.29 4.47L14.37 3.63A7.6 7.6 0 0 1 16.34 7.03L14.57 8.41A5.6 5.6 0 0 1 14.57 9.59L16.34 10.97A7.6 7.6 0 0 1 14.37 14.37L12.29 13.53A5.6 5.6 0 0 1 11.28 14.12L10.97 16.34A7.6 7.6 0 0 1 7.03 16.34L6.72 14.12A5.6 5.6 0 0 1 5.71 13.53L3.63 14.37A7.6 7.6 0 0 1 1.66 10.97L3.43 9.59A5.6 5.6 0 0 1 3.43 8.41L1.66 7.03A7.6 7.6 0 0 1 3.63 3.63L5.71 4.47A5.6 5.6 0 0 1 6.72 3.88Z" fill="none" stroke="#3a4290" stroke-width="1.25" stroke-linejoin="round"/><circle cx="9" cy="9" r="2.6" fill="none" stroke="#3a4290" stroke-width="1.25"/></svg>
<div class="t " style="left:255px;top:437.85px;width:105px;text-align:center">LTE</div>
<div class="t " style="left:368.2px;top:437.85px">E1SB2</div>
<div class="btn" style="left:466px;top:437.44px;width:17px"><svg style="left:2.3px;top:2.6px" width="12" height="12" viewBox="0 0 24 24"><path fill="#fff" d="M3 17.25V21h3.75L17.81 9.94l-3.75-3.75L3 17.25zM20.71 7.04c.39-.39.39-1.02 0-1.41l-2.34-2.34c-.39-.39-1.02-.39-1.41 0l-1.83 1.83 3.75 3.75 1.83-1.83z"/></svg></div>
<div class="t " style="left:491px;top:437.85px;width:135px;text-align:center">UP</div>
<div class="t " style="left:627px;top:437.85px;width:120px;text-align:center">1000Mb/s Full</div>
<div class="t " style="left:748px;top:437.85px;width:158px;text-align:center">192.168.77.2/24</div>
<div class="t lk" style="left:914.2px;top:437.85px">192.168.77.1</div>
<div class="btn sh" style="left:1073px;top:437.44px;width:16px"><svg style="left:2.3px;top:2.6px" width="12" height="12" viewBox="0 0 24 24"><path fill="#fff" d="M3 17.25V21h3.75L17.81 9.94l-3.75-3.75L3 17.25zM20.71 7.04c.39-.39.39-1.02 0-1.41l-2.34-2.34c-.39-.39-1.02-.39-1.41 0l-1.83 1.83 3.75 3.75 1.83-1.83z"/></svg></div>
<div class="btn sh" style="left:1094px;top:437.35px"><svg style="left:0;top:0" width="16" height="16" viewBox="0 0 16 16"><path d="M4.4 3.1h7.1a1.8 1.8 0 0 1 1.8 1.8v4.2a1.8 1.8 0 0 1-1.8 1.8H9.9L8.6 12.9M7.6 10.9H4.4a1.8 1.8 0 0 1-1.8-1.8V4.9a1.8 1.8 0 0 1 1.8-1.8" fill="none" stroke="#dcdcee" stroke-width="1.2" stroke-linecap="round" stroke-linejoin="round"/><path d="M6.7 5.7l2.4 2.4M9.1 5.7l-2.4 2.4" stroke="#dcdcee" stroke-width="1.2"/></svg></div>
<div class="t " style="left:1131.2px;top:437.85px"><span style="letter-spacing:1px;position:relative;top:-1px">--</span></div>
<svg style="left:1226px;top:438.00px" width="16" height="14" viewBox="0 0 16 14"><path d="M0.7 0v12.5H15.8" fill="none" stroke="#5ab8dd" stroke-width="1.2"/><path d="M4.3 3.1L6.2 7.6 10.3 5.2 12.5 9.6" fill="none" stroke="#169dd6" stroke-width="1.2"/><circle cx="4.3" cy="3.1" r="1.4" fill="#169dd6"/><circle cx="6.2" cy="7.6" r="1.4" fill="#169dd6"/><circle cx="10.3" cy="5.2" r="1.4" fill="#169dd6"/><circle cx="12.5" cy="9.6" r="1.4" fill="#169dd6"/></svg>
<div class="btn" style="left:1250px;top:436.85px;width:16px"><svg style="left:2.3px;top:2.6px" width="12" height="12" viewBox="0 0 24 24"><path fill="#fff" d="M3 17.25V21h3.75L17.81 9.94l-3.75-3.75L3 17.25zM20.71 7.04c.39-.39.39-1.02 0-1.41l-2.34-2.34c-.39-.39-1.02-.39-1.41 0l-1.83 1.83 3.75 3.75 1.83-1.83z"/></svg></div>
<div class="t " style="left:1274px;top:437.85px;width:126px;text-align:center">8.8.8.8</div>
<div class="t " style="left:1401px;top:431.19px;width:174px;text-align:center">164.52.154.18 /<br>Databank-latisys</div>
<div class="t lk" style="left:1583.2px;top:437.85px">Speed Test</div>
<div class="btn" style="left:1681px;top:437.44px;width:16px"><svg style="left:2.3px;top:2.6px" width="12" height="12" viewBox="0 0 24 24"><path fill="#fff" d="M3 17.25V21h3.75L17.81 9.94l-3.75-3.75L3 17.25zM20.71 7.04c.39-.39.39-1.02 0-1.41l-2.34-2.34c-.39-.39-1.02-.39-1.41 0l-1.83 1.83 3.75 3.75 1.83-1.83z"/></svg></div>
<div class="trk off" style="left:1747.3px;top:437.69px"></div>
<div class="knob " style="left:1743.55px;top:434.75px"></div>
<div class="trk " style="left:34px;top:480.54px"></div>
<div class="knob " style="left:49.25px;top:477.59px"></div>
<div class="t lk" style="left:106.2px;top:480.69px">ETH2</div>
<svg style="left:229px;top:479.04px" width="18" height="18" viewBox="0 0 18 18"><path d="M6.72 3.88L7.03 1.66A7.6 7.6 0 0 1 10.97 1.66L11.28 3.88A5.6 5.6 0 0 1 12.29 4.47L14.37 3.63A7.6 7.6 0 0 1 16.34 7.03L14.57 8.41A5.6 5.6 0 0 1 14.57 9.59L16.34 10.97A7.6 7.6 0 0 1 14.37 14.37L12.29 13.53A5.6 5.6 0 0 1 11.28 14.12L10.97 16.34A7.6 7.6 0 0 1 7.03 16.34L6.72 14.12A5.6 5.6 0 0 1 5.71 13.53L3.63 14.37A7.6 7.6 0 0 1 1.66 10.97L3.43 9.59A5.6 5.6 0 0 1 3.43 8.41L1.66 7.03A7.6 7.6 0 0 1 3.63 3.63L5.71 4.47A5.6 5.6 0 0 1 6.72 3.88Z" fill="none" stroke="#3a4290" stroke-width="1.25" stroke-linejoin="round"/><circle cx="9" cy="9" r="2.6" fill="none" stroke="#3a4290" stroke-width="1.25"/></svg>
<div class="t " style="left:255px;top:480.69px;width:105px;text-align:center">FBB</div>
<div class="t " style="left:368.2px;top:480.69px">FBB</div>
<div class="btn" style="left:466px;top:480.29px;width:17px"><svg style="left:2.3px;top:2.6px" width="12" height="12" viewBox="0 0 24 24"><path fill="#fff" d="M3 17.25V21h3.75L17.81 9.94l-3.75-3.75L3 17.25zM20.71 7.04c.39-.39.39-1.02 0-1.41l-2.34-2.34c-.39-.39-1.02-.39-1.41 0l-1.83 1.83 3.75 3.75 1.83-1.83z"/></svg></div>
<div class="t " style="left:491px;top:480.69px;width:135px;text-align:center">Down</div>
<div class="t " style="left:627px;top:480.69px;width:120px;text-align:center"><span style="letter-spacing:1px;position:relative;top:-1px">--</span></div>
<div class="t " style="left:748px;top:480.69px;width:158px;text-align:center"><span style="letter-spacing:1px;position:relative;top:-1px">--</span></div>
<div class="t " style="left:914.2px;top:480.69px"><span style="letter-spacing:1px;position:relative;top:-1px">--</span></div>
<div class="btn sh gr" style="left:1094px;top:480.19px"><svg style="left:0;top:0" width="16" height="16" viewBox="0 0 16 16"><path d="M4.4 3.1h7.1a1.8 1.8 0 0 1 1.8 1.8v4.2a1.8 1.8 0 0 1-1.8 1.8H9.9L8.6 12.9M7.6 10.9H4.4a1.8 1.8 0 0 1-1.8-1.8V4.9a1.8 1.8 0 0 1 1.8-1.8" fill="none" stroke="#505050" stroke-width="1.2" stroke-linecap="round" stroke-linejoin="round"/><path d="M7.9 5.4v3.2M6.3 7h3.2" stroke="#505050" stroke-width="1.3"/></svg></div>
<div class="t " style="left:1131.2px;top:480.69px"><span style="letter-spacing:1px;position:relative;top:-1px">--</span></div>
<svg style="left:1226px;top:480.84px" width="16" height="14" viewBox="0 0 16 14"><path d="M0.7 0v12.5H15.8" fill="none" stroke="#5ab8dd" stroke-width="1.2"/><path d="M4.3 3.1L6.2 7.6 10.3 5.2 12.5 9.6" fill="none" stroke="#169dd6" stroke-width="1.2"/><circle cx="4.3" cy="3.1" r="1.4" fill="#169dd6"/><circle cx="6.2" cy="7.6" r="1.4" fill="#169dd6"/><circle cx="10.3" cy="5.2" r="1.4" fill="#169dd6"/><circle cx="12.5" cy="9.6" r="1.4" fill="#169dd6"/></svg>
<div class="btn" style="left:1250px;top:479.69px;width:16px"><svg style="left:2.3px;top:2.6px" width="12" height="12" viewBox="0 0 24 24"><path fill="#fff" d="M3 17.25V21h3.75L17.81 9.94l-3.75-3.75L3 17.25zM20.71 7.04c.39-.39.39-1.02 0-1.41l-2.34-2.34c-.39-.39-1.02-.39-1.41 0l-1.83 1.83 3.75 3.75 1.83-1.83z"/></svg></div>
<div class="t " style="left:1274px;top:480.69px;width:126px;text-align:center"><span style="letter-spacing:1px;position:relative;top:-1px">--</span></div>
<div class="t " style="left:1401px;top:474.04px;width:174px;text-align:center"><span style="letter-spacing:1px;position:relative;top:-1px">--</span> /<br><span style="letter-spacing:1px;position:relative;top:-1px">--</span></div>
<div class="t lg" style="left:1583.2px;top:480.69px">Speed Test</div>
<div class="btn" style="left:1681px;top:480.29px;width:16px"><svg style="left:2.3px;top:2.6px" width="12" height="12" viewBox="0 0 24 24"><path fill="#fff" d="M3 17.25V21h3.75L17.81 9.94l-3.75-3.75L3 17.25zM20.71 7.04c.39-.39.39-1.02 0-1.41l-2.34-2.34c-.39-.39-1.02-.39-1.41 0l-1.83 1.83 3.75 3.75 1.83-1.83z"/></svg></div>
<div class="trk off" style="left:1747.3px;top:480.54px"></div>
<div class="knob " style="left:1743.55px;top:477.59px"></div>
<div class="trk " style="left:34px;top:523.39px"></div>
<div class="knob " style="left:49.25px;top:520.44px"></div>
<div class="t " style="left:106.2px;top:523.54px">VSAT1</div>
<svg style="left:229px;top:521.89px" width="18" height="18" viewBox="0 0 18 18"><path d="M6.72 3.88L7.03 1.66A7.6 7.6 0 0 1 10.97 1.66L11.28 3.88A5.6 5.6 0 0 1 12.29 4.47L14.37 3.63A7.6 7.6 0 0 1 16.34 7.03L14.57 8.41A5.6 5.6 0 0 1 14.57 9.59L16.34 10.97A7.6 7.6 0 0 1 14.37 14.37L12.29 13.53A5.6 5.6 0 0 1 11.28 14.12L10.97 16.34A7.6 7.6 0 0 1 7.03 16.34L6.72 14.12A5.6 5.6 0 0 1 5.71 13.53L3.63 14.37A7.6 7.6 0 0 1 1.66 10.97L3.43 9.59A5.6 5.6 0 0 1 3.43 8.41L1.66 7.03A7.6 7.6 0 0 1 3.63 3.63L5.71 4.47A5.6 5.6 0 0 1 6.72 3.88Z" fill="none" stroke="#3a4290" stroke-width="1.25" stroke-linejoin="round"/><circle cx="9" cy="9" r="2.6" fill="none" stroke="#3a4290" stroke-width="1.25"/></svg>
<div class="t " style="left:255px;top:523.54px;width:105px;text-align:center">VSAT Mgmt</div>
<div class="t " style="left:368.2px;top:523.54px">VSAT M...</div>
<div class="btn" style="left:466px;top:523.14px;width:17px"><svg style="left:2.3px;top:2.6px" width="12" height="12" viewBox="0 0 24 24"><path fill="#fff" d="M3 17.25V21h3.75L17.81 9.94l-3.75-3.75L3 17.25zM20.71 7.04c.39-.39.39-1.02 0-1.41l-2.34-2.34c-.39-.39-1.02-.39-1.41 0l-1.83 1.83 3.75 3.75 1.83-1.83z"/></svg></div>
<div class="t " style="left:491px;top:523.54px;width:135px;text-align:center">UP</div>
<div class="t " style="left:627px;top:523.54px;width:120px;text-align:center">1000Mb/s Full</div>
<div class="t " style="left:748px;top:523.54px;width:158px;text-align:center">10.0.1.3/24</div>
<div class="t lk" style="left:914.2px;top:523.54px">10.0.1.1</div>
<div class="btn sh gr" style="left:1094px;top:523.04px"><svg style="left:0;top:0" width="16" height="16" viewBox="0 0 16 16"><path d="M4.4 3.1h7.1a1.8 1.8 0 0 1 1.8 1.8v4.2a1.8 1.8 0 0 1-1.8 1.8H9.9L8.6 12.9M7.6 10.9H4.4a1.8 1.8 0 0 1-1.8-1.8V4.9a1.8 1.8 0 0 1 1.8-1.8" fill="none" stroke="#505050" stroke-width="1.2" stroke-linecap="round" stroke-linejoin="round"/><path d="M7.9 5.4v3.2M6.3 7h3.2" stroke="#505050" stroke-width="1.3"/></svg></div>
<div class="t " style="left:1131.2px;top:523.54px"><span style="letter-spacing:1px;position:relative;top:-1px">--</span></div>
<div class="btn gr" style="left:1250px;top:522.54px;width:16px"><svg style="left:2.3px;top:2.6px" width="12" height="12" viewBox="0 0 24 24"><path fill="#3a3a3a" d="M3 17.25V21h3.75L17.81 9.94l-3.75-3.75L3 17.25zM20.71 7.04c.39-.39.39-1.02 0-1.41l-2.34-2.34c-.39-.39-1.02-.39-1.41 0l-1.83 1.83 3.75 3.75 1.83-1.83z"/></svg></div>
<div class="t " style="left:1274px;top:523.54px;width:126px;text-align:center"><span style="letter-spacing:1px;position:relative;top:-1px">--</span></div>
<div class="t " style="left:1401px;top:516.89px;width:174px;text-align:center"><span style="letter-spacing:1px;position:relative;top:-1px">--</span> /<br><span style="letter-spacing:1px;position:relative;top:-1px">--</span></div>
<div class="t lg" style="left:1583.2px;top:523.54px">Speed Test</div>
<div class="btn gr" style="left:1681px;top:523.14px;width:16px"><svg style="left:2.3px;top:2.6px" width="12" height="12" viewBox="0 0 24 24"><path fill="#3a3a3a" d="M3 17.25V21h3.75L17.81 9.94l-3.75-3.75L3 17.25zM20.71 7.04c.39-.39.39-1.02 0-1.41l-2.34-2.34c-.39-.39-1.02-.39-1.41 0l-1.83 1.83 3.75 3.75 1.83-1.83z"/></svg></div>
<div class="trk dis" style="left:1747.3px;top:523.39px"></div>
<div class="knob dis" style="left:1743.55px;top:520.44px"></div>
<div class="trk " style="left:34px;top:566.23px"></div>
<div class="knob " style="left:49.25px;top:563.28px"></div>
<div class="t lk" style="left:106.2px;top:566.38px">VSAT1.3334</div>
<svg style="left:229px;top:564.73px" width="18" height="18" viewBox="0 0 18 18"><path d="M6.72 3.88L7.03 1.66A7.6 7.6 0 0 1 10.97 1.66L11.28 3.88A5.6 5.6 0 0 1 12.29 4.47L14.37 3.63A7.6 7.6 0 0 1 16.34 7.03L14.57 8.41A5.6 5.6 0 0 1 14.57 9.59L16.34 10.97A7.6 7.6 0 0 1 14.37 14.37L12.29 13.53A5.6 5.6 0 0 1 11.28 14.12L10.97 16.34A7.6 7.6 0 0 1 7.03 16.34L6.72 14.12A5.6 5.6 0 0 1 5.71 13.53L3.63 14.37A7.6 7.6 0 0 1 1.66 10.97L3.43 9.59A5.6 5.6 0 0 1 3.43 8.41L1.66 7.03A7.6 7.6 0 0 1 3.63 3.63L5.71 4.47A5.6 5.6 0 0 1 6.72 3.88Z" fill="none" stroke="#3a4290" stroke-width="1.25" stroke-linejoin="round"/><circle cx="9" cy="9" r="2.6" fill="none" stroke="#3a4290" stroke-width="1.25"/></svg>
<div class="t " style="left:255px;top:566.38px;width:105px;text-align:center">VSAT</div>
<div class="t " style="left:368.2px;top:566.38px">VSAT 1</div>
<div class="btn" style="left:466px;top:565.98px;width:17px"><svg style="left:2.3px;top:2.6px" width="12" height="12" viewBox="0 0 24 24"><path fill="#fff" d="M3 17.25V21h3.75L17.81 9.94l-3.75-3.75L3 17.25zM20.71 7.04c.39-.39.39-1.02 0-1.41l-2.34-2.34c-.39-.39-1.02-.39-1.41 0l-1.83 1.83 3.75 3.75 1.83-1.83z"/></svg></div>
<div class="t " style="left:491px;top:566.38px;width:135px;text-align:center">Up - No Internet</div>
<div class="t " style="left:627px;top:566.38px;width:120px;text-align:center">1000Mb/s Full</div>
<div class="t " style="left:748px;top:566.38px;width:158px;text-align:center">64.110.182.179/29</div>
<div class="t lk" style="left:914.2px;top:566.38px">64.110.182.177</div>
<div class="btn sh" style="left:1073px;top:565.98px;width:16px"><svg style="left:2.3px;top:2.6px" width="12" height="12" viewBox="0 0 24 24"><path fill="#fff" d="M3 17.25V21h3.75L17.81 9.94l-3.75-3.75L3 17.25zM20.71 7.04c.39-.39.39-1.02 0-1.41l-2.34-2.34c-.39-.39-1.02-.39-1.41 0l-1.83 1.83 3.75 3.75 1.83-1.83z"/></svg></div>
<div class="btn sh" style="left:1094px;top:565.88px"><svg style="left:0;top:0" width="16" height="16" viewBox="0 0 16 16"><path d="M4.4 3.1h7.1a1.8 1.8 0 0 1 1.8 1.8v4.2a1.8 1.8 0 0 1-1.8 1.8H9.9L8.6 12.9M7.6 10.9H4.4a1.8 1.8 0 0 1-1.8-1.8V4.9a1.8 1.8 0 0 1 1.8-1.8" fill="none" stroke="#dcdcee" stroke-width="1.2" stroke-linecap="round" stroke-linejoin="round"/><path d="M6.7 5.7l2.4 2.4M9.1 5.7l-2.4 2.4" stroke="#dcdcee" stroke-width="1.2"/></svg></div>
<div class="t " style="left:1131.2px;top:566.38px"><span style="letter-spacing:1px;position:relative;top:-1px">--</span></div>
<svg style="left:1226px;top:566.53px" width="16" height="14" viewBox="0 0 16 14"><path d="M0.7 0v12.5H15.8" fill="none" stroke="#5ab8dd" stroke-width="1.2"/><path d="M4.3 3.1L6.2 7.6 10.3 5.2 12.5 9.6" fill="none" stroke="#169dd6" stroke-width="1.2"/><circle cx="4.3" cy="3.1" r="1.4" fill="#169dd6"/><circle cx="6.2" cy="7.6" r="1.4" fill="#169dd6"/><circle cx="10.3" cy="5.2" r="1.4" fill="#169dd6"/><circle cx="12.5" cy="9.6" r="1.4" fill="#169dd6"/></svg>
<div class="btn" style="left:1250px;top:565.38px;width:16px"><svg style="left:2.3px;top:2.6px" width="12" height="12" viewBox="0 0 24 24"><path fill="#fff" d="M3 17.25V21h3.75L17.81 9.94l-3.75-3.75L3 17.25zM20.71 7.04c.39-.39.39-1.02 0-1.41l-2.34-2.34c-.39-.39-1.02-.39-1.41 0l-1.83 1.83 3.75 3.75 1.83-1.83z"/></svg></div>
<div class="t " style="left:1274px;top:559.73px;width:126px;text-align:center">8.8.8.8<br>8.8.4.4</div>
<div class="t " style="left:1401px;top:559.73px;width:174px;text-align:center"><span style="letter-spacing:1px;position:relative;top:-1px">--</span> /<br><span style="letter-spacing:1px;position:relative;top:-1px">--</span></div>
<div class="t lg" style="left:1583.2px;top:566.38px">Speed Test</div>
<div class="btn" style="left:1681px;top:565.98px;width:16px"><svg style="left:2.3px;top:2.6px" width="12" height="12" viewBox="0 0 24 24"><path fill="#fff" d="M3 17.25V21h3.75L17.81 9.94l-3.75-3.75L3 17.25zM20.71 7.04c.39-.39.39-1.02 0-1.41l-2.34-2.34c-.39-.39-1.02-.39-1.41 0l-1.83 1.83 3.75 3.75 1.83-1.83z"/></svg></div>
<div class="trk off" style="left:1747.3px;top:566.23px"></div>
<div class="knob " style="left:1743.55px;top:563.28px"></div>
<div class="trk " style="left:34px;top:609.08px"></div>
<div class="knob " style="left:49.25px;top:606.13px"></div>
<div class="t lk" style="left:106.2px;top:609.23px">ETH3</div>
<svg style="left:229px;top:607.58px" width="18" height="18" viewBox="0 0 18 18"><path d="M6.72 3.88L7.03 1.66A7.6 7.6 0 0 1 10.97 1.66L11.28 3.88A5.6 5.6 0 0 1 12.29 4.47L14.37 3.63A7.6 7.6 0 0 1 16.34 7.03L14.57 8.41A5.6 5.6 0 0 1 14.57 9.59L16.34 10.97A7.6 7.6 0 0 1 14.37 14.37L12.29 13.53A5.6 5.6 0 0 1 11.28 14.12L10.97 16.34A7.6 7.6 0 0 1 7.03 16.34L6.72 14.12A5.6 5.6 0 0 1 5.71 13.53L3.63 14.37A7.6 7.6 0 0 1 1.66 10.97L3.43 9.59A5.6 5.6 0 0 1 3.43 8.41L1.66 7.03A7.6 7.6 0 0 1 3.63 3.63L5.71 4.47A5.6 5.6 0 0 1 6.72 3.88Z" fill="none" stroke="#3a4290" stroke-width="1.25" stroke-linejoin="round"/><circle cx="9" cy="9" r="2.6" fill="none" stroke="#3a4290" stroke-width="1.25"/></svg>
<div class="t " style="left:255px;top:609.23px;width:105px;text-align:center">VSAT</div>
<div class="t " style="left:368.2px;top:609.23px">VSAT 2</div>
<div class="btn" style="left:466px;top:608.83px;width:17px"><svg style="left:2.3px;top:2.6px" width="12" height="12" viewBox="0 0 24 24"><path fill="#fff" d="M3 17.25V21h3.75L17.81 9.94l-3.75-3.75L3 17.25zM20.71 7.04c.39-.39.39-1.02 0-1.41l-2.34-2.34c-.39-.39-1.02-.39-1.41 0l-1.83 1.83 3.75 3.75 1.83-1.83z"/></svg></div>
<div class="t " style="left:491px;top:609.23px;width:135px;text-align:center">Up - No Internet</div>
<div class="t " style="left:627px;top:609.23px;width:120px;text-align:center">1000Mb/s Full</div>
<div class="t " style="left:748px;top:609.23px;width:158px;text-align:center"><span style="letter-spacing:1px;position:relative;top:-1px">--</span></div>
<div class="t " style="left:914.2px;top:609.23px"><span style="letter-spacing:1px;position:relative;top:-1px">--</span></div>
<div class="btn sh" style="left:1073px;top:608.83px;width:16px"><svg style="left:2.3px;top:2.6px" width="12" height="12" viewBox="0 0 24 24"><path fill="#fff" d="M3 17.25V21h3.75L17.81 9.94l-3.75-3.75L3 17.25zM20.71 7.04c.39-.39.39-1.02 0-1.41l-2.34-2.34c-.39-.39-1.02-.39-1.41 0l-1.83 1.83 3.75 3.75 1.83-1.83z"/></svg></div>
<div class="btn sh gr" style="left:1094px;top:608.73px"><svg style="left:0;top:0" width="16" height="16" viewBox="0 0 16 16"><path d="M4.4 3.1h7.1a1.8 1.8 0 0 1 1.8 1.8v4.2a1.8 1.8 0 0 1-1.8 1.8H9.9L8.6 12.9M7.6 10.9H4.4a1.8 1.8 0 0 1-1.8-1.8V4.9a1.8 1.8 0 0 1 1.8-1.8" fill="none" stroke="#505050" stroke-width="1.2" stroke-linecap="round" stroke-linejoin="round"/><path d="M7.9 5.4v3.2M6.3 7h3.2" stroke="#505050" stroke-width="1.3"/></svg></div>
<div class="t " style="left:1131.2px;top:609.23px"><span style="letter-spacing:1px;position:relative;top:-1px">--</span></div>
<svg style="left:1226px;top:609.38px" width="16" height="14" viewBox="0 0 16 14"><path d="M0.7 0v12.5H15.8" fill="none" stroke="#5ab8dd" stroke-width="1.2"/><path d="M4.3 3.1L6.2 7.6 10.3 5.2 12.5 9.6" fill="none" stroke="#169dd6" stroke-width="1.2"/><circle cx="4.3" cy="3.1" r="1.4" fill="#169dd6"/><circle cx="6.2" cy="7.6" r="1.4" fill="#169dd6"/><circle cx="10.3" cy="5.2" r="1.4" fill="#169dd6"/><circle cx="12.5" cy="9.6" r="1.4" fill="#169dd6"/></svg>
<div class="btn" style="left:1250px;top:608.23px;width:16px"><svg style="left:2.3px;top:2.6px" width="12" height="12" viewBox="0 0 24 24"><path fill="#fff" d="M3 17.25V21h3.75L17.81 9.94l-3.75-3.75L3 17.25zM20.71 7.04c.39-.39.39-1.02 0-1.41l-2.34-2.34c-.39-.39-1.02-.39-1.41 0l-1.83 1.83 3.75 3.75 1.83-1.83z"/></svg></div>
<div class="t " style="left:1274px;top:609.23px;width:126px;text-align:center"><span style="letter-spacing:1px;position:relative;top:-1px">--</span></div>
<div class="t " style="left:1401px;top:602.58px;width:174px;text-align:center"><span style="letter-spacing:1px;position:relative;top:-1px">--</span> /<br><span style="letter-spacing:1px;position:relative;top:-1px">--</span></div>
<div class="t lg" style="left:1583.2px;top:609.23px">Speed Test</div>
<div class="btn" style="left:1681px;top:608.83px;width:16px"><svg style="left:2.3px;top:2.6px" width="12" height="12" viewBox="0 0 24 24"><path fill="#fff" d="M3 17.25V21h3.75L17.81 9.94l-3.75-3.75L3 17.25zM20.71 7.04c.39-.39.39-1.02 0-1.41l-2.34-2.34c-.39-.39-1.02-.39-1.41 0l-1.83 1.83 3.75 3.75 1.83-1.83z"/></svg></div>
<div class="trk off" style="left:1747.3px;top:609.08px"></div>
<div class="knob " style="left:1743.55px;top:606.13px"></div>
<div class="trk " style="left:34px;top:651.92px"></div>
<div class="knob " style="left:49.25px;top:648.97px"></div>
<div class="t " style="left:106.2px;top:652.07px">ETH4</div>
<svg style="left:229px;top:650.42px" width="18" height="18" viewBox="0 0 18 18"><path d="M6.72 3.88L7.03 1.66A7.6 7.6 0 0 1 10.97 1.66L11.28 3.88A5.6 5.6 0 0 1 12.29 4.47L14.37 3.63A7.6 7.6 0 0 1 16.34 7.03L14.57 8.41A5.6 5.6 0 0 1 14.57 9.59L16.34 10.97A7.6 7.6 0 0 1 14.37 14.37L12.29 13.53A5.6 5.6 0 0 1 11.28 14.12L10.97 16.34A7.6 7.6 0 0 1 7.03 16.34L6.72 14.12A5.6 5.6 0 0 1 5.71 13.53L3.63 14.37A7.6 7.6 0 0 1 1.66 10.97L3.43 9.59A5.6 5.6 0 0 1 3.43 8.41L1.66 7.03A7.6 7.6 0 0 1 3.63 3.63L5.71 4.47A5.6 5.6 0 0 1 6.72 3.88Z" fill="none" stroke="#3a4290" stroke-width="1.25" stroke-linejoin="round"/><circle cx="9" cy="9" r="2.6" fill="none" stroke="#3a4290" stroke-width="1.25"/></svg>
<div class="t " style="left:255px;top:652.07px;width:105px;text-align:center">LAN Trunk</div>
<div class="t " style="left:368.2px;top:652.07px">LAN</div>
<div class="btn" style="left:466px;top:651.67px;width:17px"><svg style="left:2.3px;top:2.6px" width="12" height="12" viewBox="0 0 24 24"><path fill="#fff" d="M3 17.25V21h3.75L17.81 9.94l-3.75-3.75L3 17.25zM20.71 7.04c.39-.39.39-1.02 0-1.41l-2.34-2.34c-.39-.39-1.02-.39-1.41 0l-1.83 1.83 3.75 3.75 1.83-1.83z"/></svg></div>
<div class="t " style="left:491px;top:652.07px;width:135px;text-align:center">UP</div>
<div class="t " style="left:627px;top:652.07px;width:120px;text-align:center">1000Mb/s Full</div>
<div class="t " style="left:748px;top:652.07px;width:158px;text-align:center"><span style="letter-spacing:1px;position:relative;top:-1px">--</span></div>
<div class="t " style="left:914.2px;top:652.07px"><span style="letter-spacing:1px;position:relative;top:-1px">--</span></div>
<div class="btn sh gr" style="left:1094px;top:651.57px"><svg style="left:0;top:0" width="16" height="16" viewBox="0 0 16 16"><path d="M4.4 3.1h7.1a1.8 1.8 0 0 1 1.8 1.8v4.2a1.8 1.8 0 0 1-1.8 1.8H9.9L8.6 12.9M7.6 10.9H4.4a1.8 1.8 0 0 1-1.8-1.8V4.9a1.8 1.8 0 0 1 1.8-1.8" fill="none" stroke="#505050" stroke-width="1.2" stroke-linecap="round" stroke-linejoin="round"/><path d="M7.9 5.4v3.2M6.3 7h3.2" stroke="#505050" stroke-width="1.3"/></svg></div>
<div class="t " style="left:1131.2px;top:652.07px"><span style="letter-spacing:1px;position:relative;top:-1px">--</span></div>
<div class="btn gr" style="left:1250px;top:651.07px;width:16px"><svg style="left:2.3px;top:2.6px" width="12" height="12" viewBox="0 0 24 24"><path fill="#3a3a3a" d="M3 17.25V21h3.75L17.81 9.94l-3.75-3.75L3 17.25zM20.71 7.04c.39-.39.39-1.02 0-1.41l-2.34-2.34c-.39-.39-1.02-.39-1.41 0l-1.83 1.83 3.75 3.75 1.83-1.83z"/></svg></div>
<div class="t " style="left:1274px;top:652.07px;width:126px;text-align:center"><span style="letter-spacing:1px;position:relative;top:-1px">--</span></div>
<div class="t " style="left:1401px;top:645.42px;width:174px;text-align:center"><span style="letter-spacing:1px;position:relative;top:-1px">--</span> /<br><span style="letter-spacing:1px;position:relative;top:-1px">--</span></div>
<div class="t lg" style="left:1583.2px;top:652.07px">Speed Test</div>
<div class="btn gr" style="left:1681px;top:651.67px;width:16px"><svg style="left:2.3px;top:2.6px" width="12" height="12" viewBox="0 0 24 24"><path fill="#3a3a3a" d="M3 17.25V21h3.75L17.81 9.94l-3.75-3.75L3 17.25zM20.71 7.04c.39-.39.39-1.02 0-1.41l-2.34-2.34c-.39-.39-1.02-.39-1.41 0l-1.83 1.83 3.75 3.75 1.83-1.83z"/></svg></div>
<div class="trk dis" style="left:1747.3px;top:651.92px"></div>
<div class="knob dis" style="left:1743.55px;top:648.97px"></div>
<div class="trk " style="left:34px;top:694.77px"></div>
<div class="knob " style="left:49.25px;top:691.82px"></div>
<div class="t " style="left:106.2px;top:694.92px">ETH5</div>
<svg style="left:229px;top:693.27px" width="18" height="18" viewBox="0 0 18 18"><path d="M6.72 3.88L7.03 1.66A7.6 7.6 0 0 1 10.97 1.66L11.28 3.88A5.6 5.6 0 0 1 12.29 4.47L14.37 3.63A7.6 7.6 0 0 1 16.34 7.03L14.57 8.41A5.6 5.6 0 0 1 14.57 9.59L16.34 10.97A7.6 7.6 0 0 1 14.37 14.37L12.29 13.53A5.6 5.6 0 0 1 11.28 14.12L10.97 16.34A7.6 7.6 0 0 1 7.03 16.34L6.72 14.12A5.6 5.6 0 0 1 5.71 13.53L3.63 14.37A7.6 7.6 0 0 1 1.66 10.97L3.43 9.59A5.6 5.6 0 0 1 3.43 8.41L1.66 7.03A7.6 7.6 0 0 1 3.63 3.63L5.71 4.47A5.6 5.6 0 0 1 6.72 3.88Z" fill="none" stroke="#3a4290" stroke-width="1.25" stroke-linejoin="round"/><circle cx="9" cy="9" r="2.6" fill="none" stroke="#3a4290" stroke-width="1.25"/></svg>
<div class="t " style="left:255px;top:694.92px;width:105px;text-align:center">LAN Trunk</div>
<div class="t " style="left:368.2px;top:694.92px">LAN2</div>
<div class="btn" style="left:466px;top:694.52px;width:17px"><svg style="left:2.3px;top:2.6px" width="12" height="12" viewBox="0 0 24 24"><path fill="#fff" d="M3 17.25V21h3.75L17.81 9.94l-3.75-3.75L3 17.25zM20.71 7.04c.39-.39.39-1.02 0-1.41l-2.34-2.34c-.39-.39-1.02-.39-1.41 0l-1.83 1.83 3.75 3.75 1.83-1.83z"/></svg></div>
<div class="t " style="left:491px;top:694.92px;width:135px;text-align:center">Down</div>
<div class="t " style="left:627px;top:694.92px;width:120px;text-align:center"><span style="letter-spacing:1px;position:relative;top:-1px">--</span></div>
<div class="t " style="left:748px;top:694.92px;width:158px;text-align:center"><span style="letter-spacing:1px;position:relative;top:-1px">--</span></div>
<div class="t " style="left:914.2px;top:694.92px"><span style="letter-spacing:1px;position:relative;top:-1px">--</span></div>
<div class="btn sh gr" style="left:1094px;top:694.42px"><svg style="left:0;top:0" width="16" height="16" viewBox="0 0 16 16"><path d="M4.4 3.1h7.1a1.8 1.8 0 0 1 1.8 1.8v4.2a1.8 1.8 0 0 1-1.8 1.8H9.9L8.6 12.9M7.6 10.9H4.4a1.8 1.8 0 0 1-1.8-1.8V4.9a1.8 1.8 0 0 1 1.8-1.8" fill="none" stroke="#505050" stroke-width="1.2" stroke-linecap="round" stroke-linejoin="round"/><path d="M7.9 5.4v3.2M6.3 7h3.2" stroke="#505050" stroke-width="1.3"/></svg></div>
<div class="t " style="left:1131.2px;top:694.92px"><span style="letter-spacing:1px;position:relative;top:-1px">--</span></div>
<div class="btn gr" style="left:1250px;top:693.92px;width:16px"><svg style="left:2.3px;top:2.6px" width="12" height="12" viewBox="0 0 24 24"><path fill="#3a3a3a" d="M3 17.25V21h3.75L17.81 9.94l-3.75-3.75L3 17.25zM20.71 7.04c.39-.39.39-1.02 0-1.41l-2.34-2.34c-.39-.39-1.02-.39-1.41 0l-1.83 1.83 3.75 3.75 1.83-1.83z"/></svg></div>
<div class="t " style="left:1274px;top:694.92px;width:126px;text-align:center"><span style="letter-spacing:1px;position:relative;top:-1px">--</span></div>
<div class="t " style="left:1401px;top:688.27px;width:174px;text-align:center"><span style="letter-spacing:1px;position:relative;top:-1px">--</span> /<br><span style="letter-spacing:1px;position:relative;top:-1px">--</span></div>
<div class="t lg" style="left:1583.2px;top:694.92px">Speed Test</div>
<div class="btn gr" style="left:1681px;top:694.52px;width:16px"><svg style="left:2.3px;top:2.6px" width="12" height="12" viewBox="0 0 24 24"><path fill="#3a3a3a" d="M3 17.25V21h3.75L17.81 9.94l-3.75-3.75L3 17.25zM20.71 7.04c.39-.39.39-1.02 0-1.41l-2.34-2.34c-.39-.39-1.02-.39-1.41 0l-1.83 1.83 3.75 3.75 1.83-1.83z"/></svg></div>
<div class="trk dis" style="left:1747.3px;top:694.77px"></div>
<div class="knob dis" style="left:1743.55px;top:691.82px"></div>
<div class="trk off" style="left:34px;top:737.62px"></div>
<div class="knob " style="left:30.25px;top:734.67px"></div>
<div class="t " style="left:106.2px;top:737.77px">MGMT</div>
<svg style="left:229px;top:736.12px" width="18" height="18" viewBox="0 0 18 18"><path d="M6.72 3.88L7.03 1.66A7.6 7.6 0 0 1 10.97 1.66L11.28 3.88A5.6 5.6 0 0 1 12.29 4.47L14.37 3.63A7.6 7.6 0 0 1 16.34 7.03L14.57 8.41A5.6 5.6 0 0 1 14.57 9.59L16.34 10.97A7.6 7.6 0 0 1 14.37 14.37L12.29 13.53A5.6 5.6 0 0 1 11.28 14.12L10.97 16.34A7.6 7.6 0 0 1 7.03 16.34L6.72 14.12A5.6 5.6 0 0 1 5.71 13.53L3.63 14.37A7.6 7.6 0 0 1 1.66 10.97L3.43 9.59A5.6 5.6 0 0 1 3.43 8.41L1.66 7.03A7.6 7.6 0 0 1 3.63 3.63L5.71 4.47A5.6 5.6 0 0 1 6.72 3.88Z" fill="none" stroke="#3a4290" stroke-width="1.25" stroke-linejoin="round"/><circle cx="9" cy="9" r="2.6" fill="none" stroke="#3a4290" stroke-width="1.25"/></svg>
<div class="t " style="left:255px;top:737.77px;width:105px;text-align:center"><span style="letter-spacing:1px;position:relative;top:-1px">--</span></div>
<div class="t " style="left:368.2px;top:737.77px">MGMT</div>
<div class="btn" style="left:466px;top:737.37px;width:17px"><svg style="left:2.3px;top:2.6px" width="12" height="12" viewBox="0 0 24 24"><path fill="#fff" d="M3 17.25V21h3.75L17.81 9.94l-3.75-3.75L3 17.25zM20.71 7.04c.39-.39.39-1.02 0-1.41l-2.34-2.34c-.39-.39-1.02-.39-1.41 0l-1.83 1.83 3.75 3.75 1.83-1.83z"/></svg></div>
<div class="t " style="left:491px;top:737.77px;width:135px;text-align:center">UP</div>
<div class="t " style="left:627px;top:737.77px;width:120px;text-align:center">1000Mb/s Full</div>
<div class="t " style="left:748px;top:737.77px;width:158px;text-align:center">10.255.240.1/28</div>
<div class="t " style="left:914.2px;top:737.77px"><span style="letter-spacing:1px;position:relative;top:-1px">--</span></div>
<div class="btn sh gr" style="left:1094px;top:737.27px"><svg style="left:0;top:0" width="16" height="16" viewBox="0 0 16 16"><path d="M4.4 3.1h7.1a1.8 1.8 0 0 1 1.8 1.8v4.2a1.8 1.8 0 0 1-1.8 1.8H9.9L8.6 12.9M7.6 10.9H4.4a1.8 1.8 0 0 1-1.8-1.8V4.9a1.8 1.8 0 0 1 1.8-1.8" fill="none" stroke="#505050" stroke-width="1.2" stroke-linecap="round" stroke-linejoin="round"/><path d="M7.9 5.4v3.2M6.3 7h3.2" stroke="#505050" stroke-width="1.3"/></svg></div>
<div class="t " style="left:1131.2px;top:737.77px"><span style="letter-spacing:1px;position:relative;top:-1px">--</span></div>
<div class="btn gr" style="left:1250px;top:736.77px;width:16px"><svg style="left:2.3px;top:2.6px" width="12" height="12" viewBox="0 0 24 24"><path fill="#3a3a3a" d="M3 17.25V21h3.75L17.81 9.94l-3.75-3.75L3 17.25zM20.71 7.04c.39-.39.39-1.02 0-1.41l-2.34-2.34c-.39-.39-1.02-.39-1.41 0l-1.83 1.83 3.75 3.75 1.83-1.83z"/></svg></div>
<div class="t " style="left:1274px;top:737.77px;width:126px;text-align:center"><span style="letter-spacing:1px;position:relative;top:-1px">--</span></div>
<div class="t " style="left:1401px;top:731.12px;width:174px;text-align:center"><span style="letter-spacing:1px;position:relative;top:-1px">--</span> /<br><span style="letter-spacing:1px;position:relative;top:-1px">--</span></div>
<div class="t lg" style="left:1583.2px;top:737.77px">Speed Test</div>
<div class="btn gr" style="left:1681px;top:737.37px;width:16px"><svg style="left:2.3px;top:2.6px" width="12" height="12" viewBox="0 0 24 24"><path fill="#3a3a3a" d="M3 17.25V21h3.75L17.81 9.94l-3.75-3.75L3 17.25zM20.71 7.04c.39-.39.39-1.02 0-1.41l-2.34-2.34c-.39-.39-1.02-.39-1.41 0l-1.83 1.83 3.75 3.75 1.83-1.83z"/></svg></div>
<div class="trk dis" style="left:1747.3px;top:737.62px"></div>
<div class="knob dis" style="left:1743.55px;top:734.67px"></div>
<div class="a" style="left:35px;top:711px;width:32px;height:32px;border-radius:50%;background:rgba(255,255,255,.93);border:1.5px solid #7fdcb0;box-shadow:1px 2px 4px rgba(0,0,0,.18)"></div>
<svg style="left:0;top:0" width="1822" height="763" viewBox="0 0 1822 763"><path d="M45.2 727H56.6M50 722.2L45.2 727 50 731.8" fill="none" stroke="#343c8b" stroke-width="1.9" stroke-linecap="butt" stroke-linejoin="miter"/></svg>
<div class="a" style="left:1770px;top:711px;width:32px;height:32px;border-radius:50%;background:linear-gradient(135deg,#74dcab,#a0e2c4);box-shadow:1px 2px 4px rgba(0,0,0,.18)"></div>
<svg style="left:0;top:0" width="1822" height="763" viewBox="0 0 1822 763"><path d="M1780.2 727H1792.2M1787.6 722.2L1792.4 727 1787.6 731.8" fill="none" stroke="#352f8f" stroke-width="1.9" stroke-linecap="butt" stroke-linejoin="miter"/></svg>
<div class="a" style="left:1780px;top:743px;width:62px;height:62px;border-radius:50%;background:#0a93c0"></div>
<div class="a" style="left:1797px;top:756px;width:30px;height:20px;border-radius:3px;background:#fff"></div>
</div></body></html>
